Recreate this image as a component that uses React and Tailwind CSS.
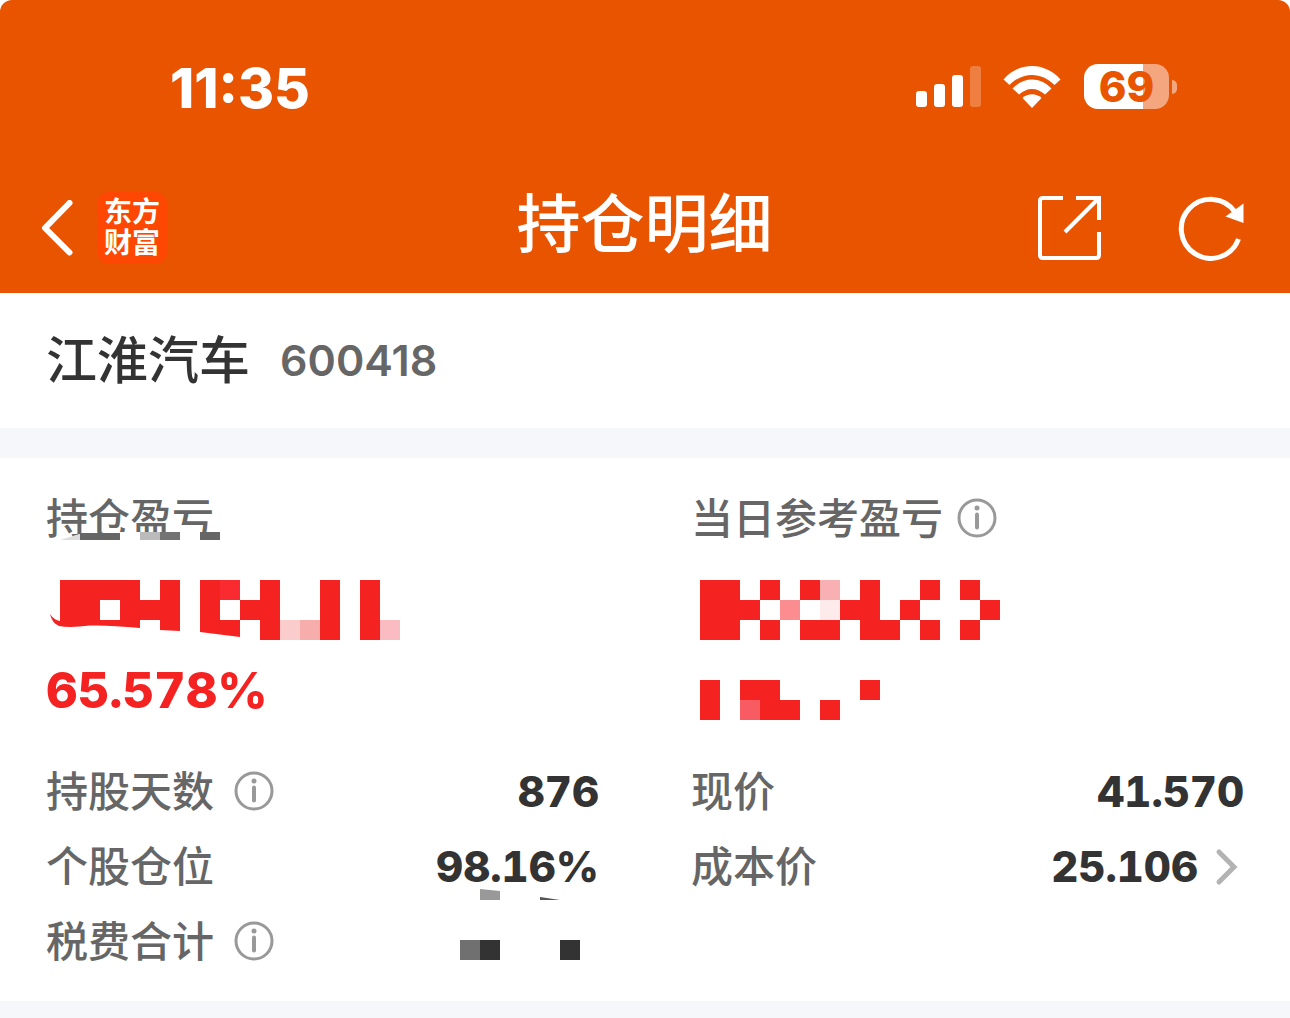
import React from "react";

const RED = "#f52222";

// Each block is [x, y, width, height, colour], on a 20px raster.
const TOTAL_BLOCKS = [
  [160, 0, 20, 20, "#f92a30"],
  [180, 20, 20, 20, RED],
  [200, 0, 20, 60, RED],
  [220, 40, 20, 20, "#fbcccc"],
  [240, 40, 20, 20, "#f8adad"],
  [260, 0, 20, 60, RED],
  [300, 0, 20, 60, RED],
  [320, 40, 20, 20, "#fabcc0"],
];

const DAILY_BLOCKS = [
  [0, 0, 40, 60, RED],
  [40, 20, 20, 20, RED],
  [60, 0, 20, 20, RED],
  [60, 40, 20, 20, RED],
  [80, 20, 20, 20, "#fb8c90"],
  [100, 0, 20, 20, RED],
  [120, 0, 20, 20, "#f8b0b3"],
  [120, 20, 20, 20, "#fdeaea"],
  [100, 40, 40, 20, RED],
  [140, 20, 20, 20, RED],
  [160, 0, 20, 60, RED],
  [180, 40, 20, 20, RED],
  [200, 20, 20, 20, RED],
  [220, 0, 20, 20, RED],
  [220, 40, 20, 20, RED],
  [260, 0, 20, 20, RED],
  [280, 20, 20, 20, RED],
  [260, 40, 20, 20, RED],
  [0, 100, 20, 40, RED],
  [40, 100, 40, 20, RED],
  [40, 120, 20, 20, "#f85c62"],
  [60, 120, 40, 20, RED],
  [120, 120, 20, 20, RED],
  [160, 100, 20, 20, RED],
];

const LABEL_BLOCKS = [
  [20, 1, 40, 7, "#666"],
  [80, 0, 20, 8, "#bbb"],
  [100, 0, 20, 8, "#737373"],
  [140, 0, 20, 8, "#666"],
];

const FEE_BLOCKS = [
  [0, 0, 20, 20, "#707070"],
  [20, 0, 20, 20, "#333"],
  [100, 0, 20, 20, "#333"],
];

function Blocks({ blocks }) {
  return blocks.map(([x, y, w, h, fill]) => (
    <rect key={`${x}-${y}`} x={x} y={y} width={w} height={h} fill={fill} />
  ));
}

function InfoButton({ label }) {
  return (
    <button type="button" aria-label={label} className="shrink-0">
      <svg width="40" height="40" viewBox="0 0 40 40" fill="none">
        <circle cx="20" cy="20" r="18" stroke="#999" strokeWidth="3" />
        <circle cx="20" cy="10" r="2.500" fill="#999" />
        <path d="M20 16.500V29.500" stroke="#999" strokeWidth="4" strokeLinecap="round" />
      </svg>
    </button>
  );
}

function StatusBar() {
  return (
    <div className="flex h-[176px] items-center justify-between pl-[170px] pr-[113px]">
      <span className="text-[55px] font-extrabold leading-none">11:35</span>
      <div className="flex items-center pb-[3px]">
        <svg width="66" height="42" viewBox="0 0 66 42" fill="#fff">
          <rect x="0" y="25" width="11" height="16" rx="3" />
          <rect x="18" y="18" width="11" height="23" rx="3" />
          <rect x="36" y="9" width="11" height="32" rx="3" />
          <rect x="54" y="0" width="11" height="41" rx="3" opacity="0.25" />
        </svg>
        <svg className="ml-[20px]" width="60" height="44" viewBox="0 0 60 44" fill="#fff">
          <path d="M1.500 14.500C17 -3.500 43 -3.500 58.500 14.500L52.500 20C39.500 6.500 20.500 6.500 7.500 20Z" />
          <path d="M10.500 23.500C22 11.500 38 11.500 49.500 23.500L43 29.500C35 22 25 22 17 29.500Z" />
          <path d="M20.500 33C26 28 34 28 39.500 33L30 43Z" />
        </svg>
        <div className="ml-[22px] flex items-center gap-[3px]">
          <div className="flex h-[45px] w-[85px] items-center justify-center rounded-[14px] bg-linear-to-r from-white from-70% to-[#f4a67f] to-70% text-[42px] font-extrabold leading-none text-[#e95400]">
            69
          </div>
          <div className="h-[14px] w-[5px] rounded-r-full bg-[#f4a67f]" />
        </div>
      </div>
    </div>
  );
}

function NavBar() {
  return (
    <nav className="flex h-[94px] items-center pl-[40px] pr-[45px]">
      <div className="flex flex-1 items-center gap-[24px] pt-[10px]">
        <button type="button" aria-label="返回">
          <svg width="33" height="56" viewBox="0 0 33 56" fill="none">
            <path d="M29.500 3L5 28L29.500 52.500" stroke="#fff" strokeWidth="6" strokeLinecap="round" strokeLinejoin="round" />
          </svg>
        </button>
        <a
          href="#home"
          className="flex h-[72px] w-[70px] items-center justify-center rounded-xl bg-[#fd4703]"
        >
          <span className="w-[56px] text-[28px] font-bold leading-[31px]">东方财富</span>
        </a>
      </div>
      <h1 className="pl-[4px] pt-[2px] text-[64px] font-medium leading-none">持仓明细</h1>
      <div className="flex flex-1 items-center justify-end gap-[74px] pt-[10px]">
        <button type="button" aria-label="分享">
          <svg width="66" height="66" viewBox="0 0 66 66" fill="none" stroke="#fff" strokeWidth="4">
            <path d="M26 3H6Q3 3 3 6V60Q3 63 6 63H59Q62 63 62 60V37" />
            <path d="M39 3H62V25M61 4L28 37" />
          </svg>
        </button>
        <button type="button" aria-label="刷新">
          <svg width="68" height="66" viewBox="0 0 68 66" fill="none">
            <path d="M61.500 44A29.500 29.500 0 1 1 58 17" stroke="#fff" strokeWidth="5" />
            <path d="M66.500 8.500V28L48.500 21.500Z" fill="#fff" />
          </svg>
        </button>
      </div>
    </nav>
  );
}

function Row({ label, info, value, children }) {
  return (
    <div className="relative flex h-[75px] items-center">
      <dt className="flex items-center gap-[20px] text-[#666]">
        <span className="pt-[2px]">{label}</span>
        {info && <InfoButton label={`${label}说明`} />}
      </dt>
      <dd className="ml-auto flex items-center pt-[2px] font-extrabold tabular-nums text-[#333]">{value}</dd>
      {children}
    </div>
  );
}

export default function App() {
  return (
    <div className="min-h-screen bg-[#f6f7fb] font-['Inter','Noto_Sans_CJK_SC',sans-serif]">
      <div className="bg-white">
        <header className="rounded-t-[12px] bg-[#e95400] pb-[23px] text-white">
          <StatusBar />
          <NavBar />
        </header>
      </div>

      <main>
        <section className="flex h-[135px] items-center gap-[30px] bg-white px-[46px] leading-none">
          <h2 className="text-[51px] font-medium text-[#333]">江淮汽车</h2>
          <span className="text-[43px] font-semibold text-[#666]">600418</span>
        </section>

        <section className="mt-[30px] bg-white px-[46px] pb-[23px] pt-[30px] text-[42px] font-medium leading-none">
          <div className="grid grid-cols-2 gap-x-[92px]">
            <div>
              <div className="relative flex h-[60px] items-center text-[#666]">
                <span className="pt-[2px]">持仓盈亏</span>
                <svg className="absolute left-[14px] top-[44px]" width="180" height="16" viewBox="0 0 180 16">
                  <path d="M0 8L20 2L60 0H160V16H0Z" fill="#fff" />
                  <path d="M0 8L20 2V8Z" fill="#ddd" />
                  <Blocks blocks={LABEL_BLOCKS} />
                </svg>
              </div>
              <svg className="mt-[32px]" width="364" height="60" viewBox="-14 0 364 60">
                <path
                  d="M-10 34Q-6 40 0 41V0H80V48Q50 45 30 45.500Q10 48 -1 46Q-8 43 -10 34ZM40 20V40H60V20Z"
                  fill={RED}
                  fillRule="evenodd"
                />
                <path d="M80 20H100V0H120V51L100 50V40H80Z" fill={RED} />
                <path d="M140 0H180V57L140 52ZM160 20V40H180V20Z" fill={RED} fillRule="evenodd" />
                <Blocks blocks={TOTAL_BLOCKS} />
              </svg>
              <p className="mt-[20px] flex h-[60px] items-center text-[49px] font-extrabold tabular-nums text-[#f52222]">
                65.578%
              </p>
            </div>
            <div>
              <div className="flex h-[60px] items-center gap-[14px] text-[#666]">
                <span className="pt-[2px]">当日参考盈亏</span>
                <InfoButton label="当日参考盈亏说明" />
              </div>
              <svg className="ml-[9px] mt-[32px]" width="300" height="140" viewBox="0 0 300 140">
                <Blocks blocks={DAILY_BLOCKS} />
              </svg>
            </div>
          </div>

          <div className="mt-[33px] grid grid-cols-2 gap-x-[92px]">
            <dl>
              <Row label="持股天数" info value="876" />
              <Row label="个股仓位" value="98.16%">
                <svg className="absolute right-[39px] top-[60px]" width="82" height="12" viewBox="0 0 82 12">
                  <path d="M2 1L22 3V12H2Z" fill="#999" />
                  <path d="M62 9L82 12H62Z" fill="#555" />
                </svg>
              </Row>
              <Row
                label="税费合计"
                info
                value={
                  <svg className="mr-[19px] mt-4" width="120" height="20" viewBox="0 0 120 20">
                    <Blocks blocks={FEE_BLOCKS} />
                  </svg>
                }
              />
            </dl>
            <dl>
              <Row label="现价" value="41.570" />
              <Row
                label="成本价"
                value={
                  <a href="#cost" className="flex items-center gap-[16px]">
                    25.106
                    <svg width="30" height="38" viewBox="0 0 30 38" fill="none">
                      <path d="M5 4L20 19L5 34" stroke="#b3b3b3" strokeWidth="5" strokeLinecap="round" />
                    </svg>
                  </a>
                }
              />
            </dl>
          </div>
        </section>
      </main>
    </div>
  );
}
